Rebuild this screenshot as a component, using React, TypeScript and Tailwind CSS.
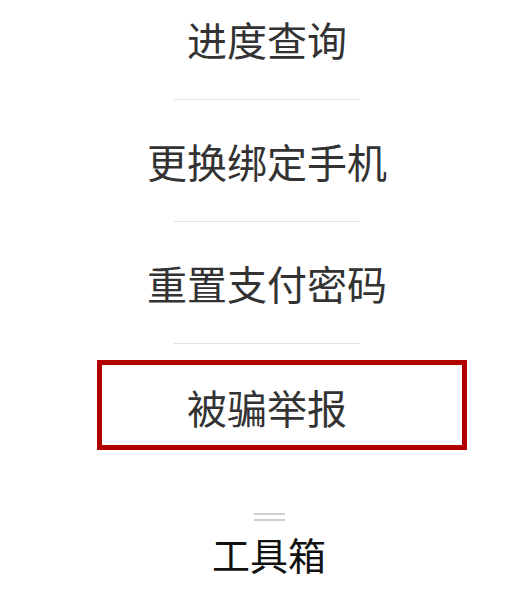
const font = { fontFamily: '"Noto Sans CJK SC", "Noto Sans", sans-serif' };

const items = ["进度查询", "更换绑定手机", "重置支付密码"];

export default function App() {
  return (
    <div className="w-[513px] h-[589px] overflow-hidden bg-white" style={font}>
      <div className="-mt-[22px] flex flex-col">
        {items.map((label) => (
          <div key={label} className="flex flex-col items-center pl-[21px]">
            <div className="h-[121px] flex items-center justify-center text-[40px] leading-none text-[#333]">
              {label}
            </div>
            <div className="h-px w-[186px] bg-[#e2e2e2]" />
          </div>
        ))}

        <div className="mt-[16px] ml-[97px] w-[370px] h-[90px] border-[5px] border-[#b00000] flex items-center pl-[85px] text-[40px] leading-none text-[#333]">
          <span className="translate-y-[2px]">被骗举报</span>
        </div>

        <div className="mt-[63px] flex flex-col items-center pl-[25px] gap-[4px]">
          <div className="h-[2px] w-[31px] bg-[#cfcfcf]" />
          <div className="h-[2px] w-[31px] bg-[#cfcfcf]" />
        </div>

        <div className="mt-[14px] flex justify-center pl-[25px] text-[38px] leading-none text-[#111]">
          工具箱
        </div>
      </div>
    </div>
  );
}
